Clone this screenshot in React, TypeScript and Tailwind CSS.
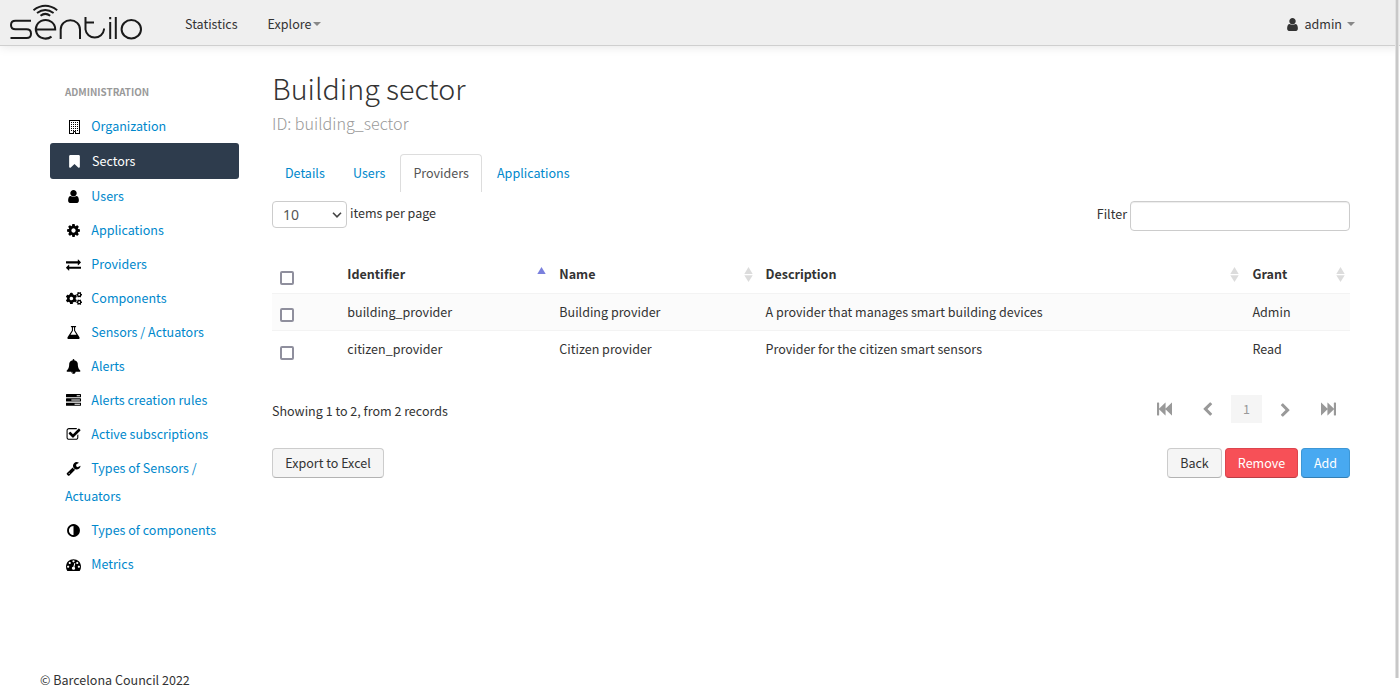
import type { ReactNode } from 'react';
import { FaCogs } from 'react-icons/fa';

const paths = {
  user: 'M1536 1399q0 109-62.5 187t-150.5 78h-854q-88 0-150.5-78t-62.5-187q0-85 8.5-160.5t31.5-152 58.5-131 94-89 134.5-34.5q131 128 313 128t313-128q76 0 134.5 34.5t94 89 58.5 131 31.5 152 8.5 160.5zm-256-887q0 159-112.5 271.5t-271.5 112.5-271.5-112.5-112.5-271.5 112.5-271.5 271.5-112.5 271.5 112.5 112.5 271.5z',
  bookmark: 'M1420 128q23 0 44 9 33 13 52.5 41t19.5 62v1289q0 34-19.5 62t-52.5 41q-19 8-44 8-48 0-83-32l-441-424-441 424q-36 33-83 33-23 0-44-9-33-13-52.5-41t-19.5-62v-1289q0-34 19.5-62t52.5-41q21-9 44-9h1048z',
  cog: 'M1152 896q0-106-75-181t-181-75-181 75-75 181 75 181 181 75 181-75 75-181zm512-109v222q0 12-8 23t-20 13l-185 28q-19 54-39 91 35 50 107 138 10 12 10 25t-9 23q-27 37-99 108t-94 71q-12 0-26-9l-138-108q-44 23-91 38-16 136-29 186-7 28-36 28h-222q-14 0-24.5-8.5t-11.5-21.5l-28-184q-49-16-90-37l-141 107q-10 9-25 9-14 0-25-11-126-114-165-168-7-10-7-23 0-12 8-23 15-21 51-66.5t54-70.5q-27-50-41-99l-183-27q-13-2-21-12.5t-8-23.5v-222q0-12 8-23t19-13l186-28q14-46 39-92-40-57-107-138-10-12-10-24 0-10 9-23 26-36 98.5-107.5t94.5-71.5q13 0 26 10l138 107q44-23 91-38 16-136 29-186 7-28 36-28h222q14 0 24.5 8.5t11.5 21.5l28 184q49 16 90 37l142-107q9-9 24-9 13 0 25 10 129 119 165 170 7 8 7 22 0 12-8 23-15 21-51 66.5t-54 70.5q26 50 41 98l183 28q13 2 21 12.5t8 23.5z',
  exchange: 'M1792 1184v192q0 13-9.5 22.5t-22.5 9.5h-1376v192q0 13-9.5 22.5t-22.5 9.5q-12 0-24-10l-319-320q-9-9-9-22 0-14 9-23l320-320q9-9 23-9 13 0 22.5 9.5t9.5 22.5v192h1376q13 0 22.5 9.5t9.5 22.5zm0-544q0 14-9 23l-320 320q-9 9-23 9-13 0-22.5-9.5t-9.5-22.5v-192h-1376q-13 0-22.5-9.5t-9.5-22.5v-192q0-13 9.5-22.5t22.5-9.5h1376v-192q0-14 9-23t23-9q12 0 24 10l319 319q9 9 9 23z',
  flask: 'M1591 1448q56 89 21.5 152.5t-140.5 63.5h-1152q-106 0-140.5-63.5t21.5-152.5l503-793v-399h-64q-26 0-45-19t-19-45 19-45 45-19h512q26 0 45 19t19 45-19 45-45 19h-64v399zm-779-725l-272 429h712l-272-429-20-31v-436h-128v436z',
  bell: 'M912 1696q0-16-16-16-59 0-101.5-42.5t-42.5-101.5q0-16-16-16t-16 16q0 73 51.5 124.5t124.5 51.5q16 0 16-16zm816-288q0 52-38 90t-90 38h-448q0 106-75 181t-181 75-181-75-75-181h-448q-52 0-90-38t-38-90q50-42 91-88t85-119.5 74.5-158.5 50-206 19.5-260q0-152 117-282.5t307-158.5q-8-19-8-39 0-40 28-68t68-28 68 28 28 68q0 20-8 39 190 28 307 158.5t117 282.5q0 139 19.5 260t50 206 74.5 158.5 85 119.5 91 88z',
  tasks: 'M1024 1408h640v-128h-640v128zm-384-512h1024v-128h-1024v128zm640-512h384v-128h-384v128zm512 832v256q0 26-19 45t-45 19h-1664q-26 0-45-19t-19-45v-256q0-26 19-45t45-19h1664q26 0 45 19t19 45zm0-512v256q0 26-19 45t-45 19h-1664q-26 0-45-19t-19-45v-256q0-26 19-45t45-19h1664q26 0 45 19t19 45zm0-512v256q0 26-19 45t-45 19h-1664q-26 0-45-19t-19-45v-256q0-26 19-45t45-19h1664q26 0 45 19t19 45z',
  check: 'M1472 930v318q0 119-84.5 203.5t-203.5 84.5h-832q-119 0-203.5-84.5t-84.5-203.5v-832q0-119 84.5-203.5t203.5-84.5h832q63 0 117 25 15 7 18 23 3 17-9 29l-49 49q-10 10-23 10-3 0-9-2-23-6-45-6h-832q-66 0-113 47t-47 113v832q0 66 47 113t113 47h832q66 0 113-47t47-113v-254q0-13 9-22l64-64q10-10 23-10 6 0 12 3 20 8 20 29zm231-489l-814 814q-24 24-57 24t-57-24l-430-430q-24-24-24-57t24-57l110-110q24-24 57-24t57 24l263 263 647-647q24-24 57-24t57 24l110 110q24 24 24 57t-24 57z',
  wrench: 'M448 1472q0-26-19-45t-45-19-45 19-19 45 19 45 45 19 45-19 19-45zm644-420l-682 682q-37 37-90 37-52 0-91-37l-106-108q-38-36-38-90 0-53 38-91l681-681q39 98 114.5 173.5t173.5 114.5zm634-435q0 39-23 106-47 134-164.5 217.5t-258.5 83.5q-185 0-316.5-131.5t-131.5-316.5 131.5-316.5 316.5-131.5q58 0 121.5 16.5t107.5 46.5q16 11 16 28t-16 28l-293 169v224l193 107q5-3 79-48.5t135.5-81 70.5-35.5q15 0 23.5 10t8.5 25z',
  adjust: 'M896 1440v-1088q-148 0-273 73t-198 198-73 273 73 273 198 198 273 73zm768-544q0 209-103 385.5t-279.5 279.5-385.5 103-385.5-103-279.5-279.5-103-385.5 103-385.5 279.5-279.5 385.5-103 385.5 103 279.5 279.5 103 385.5z',
  gauge: 'M384 1152q0-53-37.5-90.5t-90.5-37.5-90.5 37.5-37.5 90.5 37.5 90.5 90.5 37.5 90.5-37.5 37.5-90.5zm192-448q0-53-37.5-90.5t-90.5-37.5-90.5 37.5-37.5 90.5 37.5 90.5 90.5 37.5 90.5-37.5 37.5-90.5zm428 481l101-382q6-26-7.5-48.5t-38.5-29.5-48 6.5-30 39.5l-101 382q-60 5-107 43.5t-63 98.5q-20 77 20 146t117 89 146-20 89-117q16-60-6-117t-72-91zm660-33q0-53-37.5-90.5t-90.5-37.5-90.5 37.5-37.5 90.5 37.5 90.5 90.5 37.5 90.5-37.5 37.5-90.5zm-640-640q0-53-37.5-90.5t-90.5-37.5-90.5 37.5-37.5 90.5 37.5 90.5 90.5 37.5 90.5-37.5 37.5-90.5zm448 192q0-53-37.5-90.5t-90.5-37.5-90.5 37.5-37.5 90.5 37.5 90.5 90.5 37.5 90.5-37.5 37.5-90.5zm320 448q0 261-141 483-19 29-54 29h-1402q-35 0-54-29-141-221-141-483 0-182 71-348t191-286 286-191 348-71 348 71 286 191 191 286 71 348z',
  first: 'M1747 141q19-19 32-13t13 32v1472q0 26-13 32t-32-13l-710-710q-9-9-13-19v710q0 26-13 32t-32-13l-710-710q-9-9-13-19v678q0 26-19 45t-45 19h-128q-26 0-45-19t-19-45v-1408q0-26 19-45t45-19h128q26 0 45 19t19 45v678q4-11 13-19l710-710q19-19 32-13t13 32v710q4-11 13-19z',
  left: 'M1427 301l-531 531 531 531q19 19 19 45t-19 45l-166 166q-19 19-45 19t-45-19l-742-742q-19-19-19-45t19-45l742-742q19-19 45-19t45 19l166 166q19 19 19 45t-19 45z',
};

function Icon({ name, className = 'size-[15px]' }: { name: keyof typeof paths; className?: string }) {
  return (
    <svg viewBox="0 0 1792 1792" className={className} fill="currentColor">
      <path d={paths[name]} />
    </svg>
  );
}

function BuildingIcon() {
  return (
    <svg viewBox="0 0 14 14" className="ml-0.5 size-3.5" fill="none" stroke="currentColor">
      <path d="M1.5 0.5H11.5M1.5 0V13.5M11.5 0V13.5M1 13.5H5.5M7.5 13.5H12M5.5 14V11.5H7.5V14" />
      <path d="M3 2.5H10.5M3 4.5H10.5M3 6.5H10.5M3 8.5H10.5M3 10.5H10.5" strokeDasharray="1 1" />
    </svg>
  );
}

function Logo() {
  return (
    <svg viewBox="0 0 150 45" className="h-[45px] w-[150px]" fill="none" stroke="#1a1a1a" strokeWidth="2">
      <path d="M31 20.7H15.5Q11 20.7 11 25T15.5 29.3H26.5Q31 29.3 31 33.7T26.5 38H10.5" />
      <path d="M36 29.4H55.2A9.7 9.3 0 1 0 51.5 36.6" />
      <path d="M60.7 39V29.5A9.6 9.3 0 0 1 80 29.5V39" />
      <path d="M85.5 17V29.5A9.3 9 0 0 0 104 29.5V28.5M85.5 22.5H94" />
      <path d="M110.2 22V39M110.2 17V19.2M115.8 17V39" />
      <ellipse cx="131.3" cy="29.3" rx="9.7" ry="9.2" />
      <path d="M33.5 10.2Q45.3 1.5 57.2 10.2M37 13Q45.3 7 53.6 13M40.5 15.8Q45.3 12 50.2 15.8" />
    </svg>
  );
}

const nav: { label: string; icon: ReactNode; active?: boolean; tall?: boolean }[] = [
  { label: 'Organization', icon: <BuildingIcon /> },
  { label: 'Sectors', icon: <Icon name="bookmark" />, active: true },
  { label: 'Users', icon: <Icon name="user" /> },
  { label: 'Applications', icon: <Icon name="cog" /> },
  { label: 'Providers', icon: <Icon name="exchange" /> },
  { label: 'Components', icon: <FaCogs className="h-[15px] w-4" /> },
  { label: 'Sensors / Actuators', icon: <Icon name="flask" /> },
  { label: 'Alerts', icon: <Icon name="bell" /> },
  { label: 'Alerts creation rules', icon: <Icon name="tasks" /> },
  { label: 'Active subscriptions', icon: <Icon name="check" /> },
  { label: 'Types of Sensors / Actuators', icon: <Icon name="wrench" />, tall: true },
  { label: 'Types of components', icon: <Icon name="adjust" /> },
  { label: 'Metrics', icon: <Icon name="gauge" /> },
];

function NavItem({ label, icon, active, tall }: (typeof nav)[number]) {
  if (active) {
    return (
      <a className="flex h-9 items-center rounded-[3px] bg-[#2e3c4d] pl-[17px] text-white">
        <span className="mr-[10px] flex w-[15px] justify-center">{icon}</span>
        {label}
      </a>
    );
  }
  return (
    <a className={`block px-[15px] py-[3px] leading-7 text-[#0088cc] ${tall ? 'h-[62px]' : 'h-[34px]'}`}>
      <span className="mr-[9px] inline-flex w-[17.3px] justify-center align-[-2.5px] text-black">{icon}</span>
      {label}
    </a>
  );
}

function Sort({ asc }: { asc?: boolean }) {
  return (
    <svg viewBox="0 0 9 15" className="h-[15px] w-[9px]">
      <path d="M4.5 0L8.7 7H0.3Z" fill={asc ? '#7a80dd' : '#dcdcdc'} />
      {!asc && <path d="M4.5 15L8.7 8.3H0.3Z" fill="#dcdcdc" />}
    </svg>
  );
}

function Box() {
  return <span className="block size-3.5 rounded-[2px] border-2 border-[#8f8f9d] bg-white" />;
}

function Caret() {
  return <span className="block border-x-4 border-t-4 border-x-transparent border-t-[#888]" />;
}

const grid = 'grid grid-cols-[75.3px_212px_206.2px_487px_97.5px]';
const rows = [
  ['building_provider', 'Building provider', 'A provider that manages smart building devices', 'Admin'],
  ['citizen_provider', 'Citizen provider', 'Provider for the citizen smart sensors', 'Read'],
];

function Header() {
  return (
    <header className="flex h-[46px] border-b border-[#cfcfcf] bg-[#efefef] shadow-[0_1px_10px_rgba(0,0,0,0.1)]">
      <Logo />
      <nav className="flex h-12 flex-1 items-center">
        <a className="ml-[35px]">Statistics</a>
        <a className="ml-[30px] flex items-center gap-[1.5px]">Explore<Caret /></a>
      </nav>
      <div className="mr-[45px] flex h-12 items-center">
        <Icon name="user" />
        <span className="mr-[5px] ml-1">admin</span>
        <Caret />
      </div>
    </header>
  );
}

export default function App() {
  return (
    <div className="relative flex h-[700px] w-[1400px] flex-col overflow-hidden bg-white font-['Noto_Sans_CJK_SC','Noto_Sans_CJK_JP',sans-serif] text-[12.54px] leading-5 text-[#333]">
      <Header />
      <div className="flex flex-1">
        <aside className="ml-[50px] w-[189px] pt-9">
          <h2 className="mb-[7px] px-[15px] text-[9.85px] leading-5 font-bold text-[#999]">ADMINISTRATION</h2>
          {nav.map((item) => <NavItem key={item.label} {...item} />)}
        </aside>
        <main className="ml-[33px] w-[1078px] pt-[22px]">
          <h1 className="h-10 pl-[0.3px] text-[28.65px] leading-10 font-light">Building sector</h1>
          <p className="h-7 pt-px text-[16.15px] leading-7 font-light text-[#999]">ID: building_sector</p>
          <div className="mt-[18px] flex h-[38px] leading-[38px] text-[#0088cc]">
            <a className="w-[68px] pl-[13px]">Details</a>
            <a className="w-[60px] pl-[13px]">Users</a>
            <a className="w-[82px] rounded-t border border-b-0 border-[#ddd] pl-[12.4px] leading-9 text-[#555]">Providers</a>
            <a className="pl-[15px]">Applications</a>
          </div>
          <div className="mt-[9px] flex h-[30px] justify-between">
            <div className="flex">
              <div className="flex h-[27px] w-[75px] items-center justify-between rounded border border-[#ccc] pr-1 pl-2.5 font-['Noto_Sans','Noto_Sans_CJK_SC',sans-serif] text-sm text-[#555]">
                10
                <svg viewBox="0 0 10 6" className="h-1.5 w-2.5" fill="none" stroke="#444" strokeWidth="1.6"><path d="M1 0.8L5 4.8L9 0.8" /></svg>
              </div>
              <span className="ml-[3px] leading-6">items per page</span>
            </div>
            <div className="flex">
              <span className="mr-[3px] leading-[26px]">Filter</span>
              <div className="h-[30px] w-[220px] rounded border border-[#ccc] shadow-[inset_0_1px_1px_rgba(0,0,0,0.075)]" />
            </div>
          </div>
          <div className={`${grid} mt-6 h-[38px] leading-[38px] font-bold`}>
            <div className="pt-4 pl-2"><Box /></div>
            <div className="flex justify-between pr-[13px]">Identifier<span className="pt-3"><Sort asc /></span></div>
            <div className="flex justify-between pr-[12.5px]">Name<span className="pt-3"><Sort /></span></div>
            <div className="flex justify-between pr-[13.5px]">Description<span className="pt-3"><Sort /></span></div>
            <div className="flex justify-between pr-[5px]">Grant<span className="pt-3"><Sort /></span></div>
          </div>
          {rows.map((row, i) => (
            <div key={row[0]} className={`${grid} leading-[35px] ${i === 0 ? 'h-[38px] border-y border-[#f3f3f3] bg-[#fbfbfb]' : 'h-[37px]'}`}>
              <div className={i === 0 ? 'pt-3.5 pl-2' : 'pt-[15px] pl-2'}><Box /></div>
              {row.map((cell) => <div key={cell}>{cell}</div>)}
            </div>
          ))}
          <div className="mt-[27px] flex h-7 justify-between">
            <span className="leading-8">Showing 1 to 2, from 2 records</span>
            <div className="flex h-7 items-center text-[#999]">
              <Icon name="first" className="mr-7 h-4 w-[15px]" />
              <Icon name="left" className="mr-4 h-[15px] w-[15px]" />
              <span className="mr-4 h-7 w-[31px] bg-[#f5f5f5] text-center leading-7">1</span>
              <Icon name="left" className="mr-7 h-[15px] w-[15px] rotate-180" />
              <Icon name="first" className="mr-3.5 h-4 w-[15px] rotate-180" />
            </div>
          </div>
          <div className="mt-[25px] flex h-[30px] gap-[3px] text-center leading-7">
            <button className="mr-auto w-28 rounded border border-[#ccc] border-b-[#b3b3b3] bg-[#f5f5f5]">Export to Excel</button>
            <button className="w-[55px] rounded border border-[#ccc] border-b-[#b3b3b3] bg-[#f5f5f5]">Back</button>
            <button className="w-[73px] rounded border border-[#dc454e] border-b-[#b93d45] bg-[#f75057] text-white">Remove</button>
            <button className="w-[49px] rounded border border-[#3d97d6] border-b-[#347fb4] bg-[#48a9f1] text-white">Add</button>
          </div>
        </main>
      </div>
      <footer className="h-[30px] pl-10 leading-5">© Barcelona Council 2022</footer>
      <div className="absolute top-0 right-[1px] h-[678px] w-1 border-x border-[#e2e2e2] bg-[#c8c8c8]" />
    </div>
  );
}
